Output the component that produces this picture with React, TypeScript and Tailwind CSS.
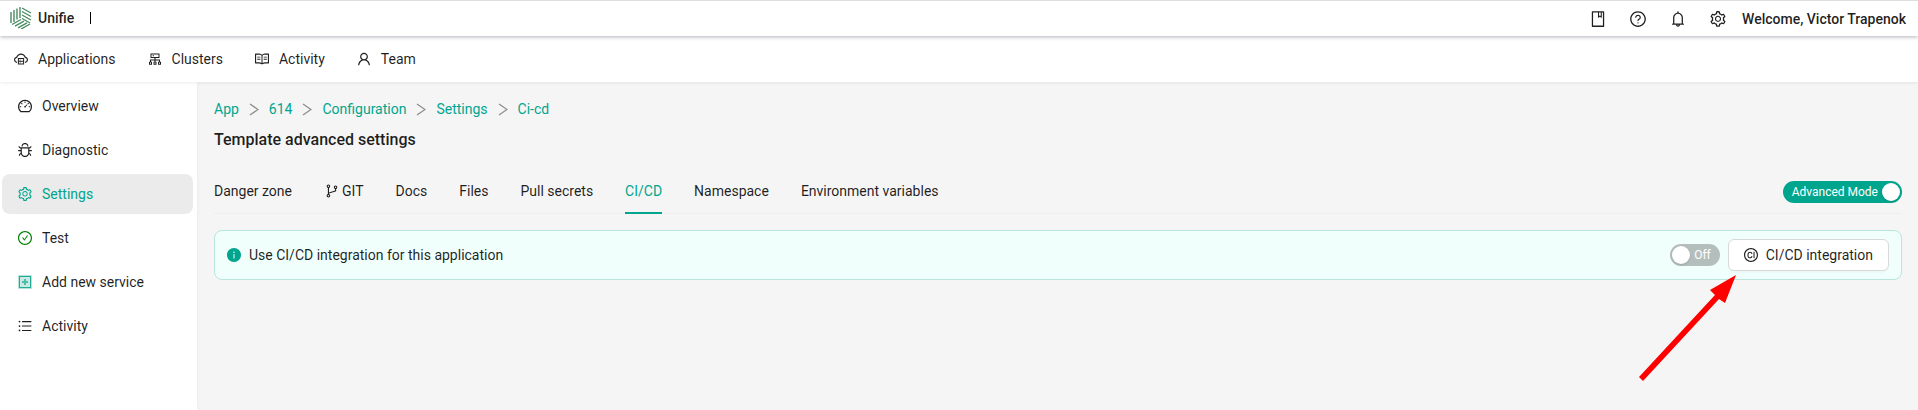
import type { ReactNode } from "react"
import {
  AiFillInfoCircle,
  AiOutlineBell,
  AiOutlineBook,
  AiOutlineBranches,
  AiOutlineBug,
  AiOutlineCheckCircle,
  AiOutlineCiCircle,
  AiOutlineCloudServer,
  AiOutlineCluster,
  AiOutlineDashboard,
  AiOutlineQuestionCircle,
  AiOutlineRead,
  AiOutlineSetting,
  AiOutlineUnorderedList,
  AiOutlineUser,
} from "react-icons/ai"

function Logo() {
  return (
    <svg width="22" height="22" viewBox="0 0 22 22" fill="none" stroke="#4a8c62" strokeWidth="1.4">
      <path d="M1 5v11M4 3v12M7 1.5v11M10 0v11" />
      <path d="M12 1l9 5M12 4.5l9 5M12 8l9 5M12 11.5l8 4.5" />
      <path d="M2 17.500l9-5M5 19.200l9-5M8 20.800l9-5M11 22l9-5" />
    </svg>
  )
}

function PlusSquare() {
  return (
    <svg width="16" height="16" viewBox="0 0 16 16">
      <rect x="1" y="1" width="14" height="14" rx="1" fill="#b5e2da" />
      <rect x="2.5" y="2.5" width="11" height="11" fill="#cbe9e3" stroke="#1fad98" />
      <path d="M8 5v6M5 8h6" stroke="#4dbdac" strokeWidth="2" />
    </svg>
  )
}

const topNav = [
  { label: "Applications", icon: <AiOutlineCloudServer size={16} /> },
  { label: "Clusters", icon: <AiOutlineCluster size={16} /> },
  { label: "Activity", icon: <AiOutlineRead size={16} /> },
  { label: "Team", icon: <AiOutlineUser size={16} /> },
]

const sideNav: { label: string; icon: ReactNode; active?: boolean }[] = [
  { label: "Overview", icon: <AiOutlineDashboard size={16} /> },
  { label: "Diagnostic", icon: <AiOutlineBug size={16} /> },
  { label: "Settings", icon: <AiOutlineSetting size={16} />, active: true },
  { label: "Test", icon: <AiOutlineCheckCircle size={16} className="text-[#008000]" /> },
  { label: "Add new service", icon: <PlusSquare /> },
  { label: "Activity", icon: <AiOutlineUnorderedList size={16} /> },
]

const crumbs = ["App", "614", "Configuration", "Settings", "Ci-cd"]

const tabs: { label: string; icon?: ReactNode; active?: boolean }[] = [
  { label: "Danger zone" },
  { label: "GIT", icon: <AiOutlineBranches size={16} /> },
  { label: "Docs" },
  { label: "Files" },
  { label: "Pull secrets" },
  { label: "CI/CD", active: true },
  { label: "Namespace" },
  { label: "Environment variables" },
]

function Header() {
  return (
    <header className="relative z-20 flex h-9 items-center justify-between border-t border-[#dedee0] bg-white pr-3 pl-2.5 shadow-[0_1px_4px_rgba(0,0,40,0.3)]">
      <div className="flex items-center pb-px font-medium">
        <Logo />
        <span className="ml-1.5">Unifie</span>
        <span className="ml-4 h-3 w-px bg-black" />
      </div>
      <div className="flex items-center gap-[22px]">
        <button aria-label="Docs"><AiOutlineBook size={18} /></button>
        <button aria-label="Help"><AiOutlineQuestionCircle size={18} /></button>
        <button aria-label="Notifications"><AiOutlineBell size={18} /></button>
        <div className="flex items-center gap-[15px]">
          <button aria-label="Settings"><AiOutlineSetting size={18} /></button>
          <span className="font-medium">Welcome, Victor Trapenok</span>
        </div>
      </div>
    </header>
  )
}

function Sidebar() {
  return (
    <aside className="w-[197px] shrink-0 bg-white px-0.5 pt-1 shadow-[0_0_4px_rgba(0,0,0,0.06)]">
      <nav className="flex flex-col gap-1">
        {sideNav.map((item, i) => (
          <a
            key={i}
            href="#"
            className={`flex h-10 w-[191px] items-center gap-[9px] rounded-lg pl-[15px] ${item.active ? "bg-[#ebebeb] text-[#00a58e]" : ""}`}
          >
            {item.icon}
            {item.label}
          </a>
        ))}
      </nav>
    </aside>
  )
}

export default function App() {
  return (
    <div className="flex min-h-screen flex-col bg-[#f5f5f5] font-['Roboto',sans-serif] text-sm text-black/88">
      <Header />
      <nav className="relative z-10 flex h-[46px] items-center gap-[31px] bg-white pl-[13px] shadow-[0_0_4px_rgba(0,0,0,0.12)]">
        {topNav.map((item) => (
          <a key={item.label} href="#" className="flex items-center gap-[9px]">
            {item.icon}
            {item.label}
          </a>
        ))}
      </nav>

      <div className="flex flex-1">
        <Sidebar />
        <main className="min-w-0 flex-1 pt-4 pr-4 pl-[17px]">
          <nav aria-label="Breadcrumb" className="flex items-center gap-2.5 leading-[22px] text-[#00a58e]">
            {crumbs.map((crumb, i) => (
              <div key={crumb} className="flex items-center gap-2.5">
                {i > 0 && (
                  <svg width="10" height="14" viewBox="0 0 10 14" fill="none" stroke="#8c8c8c" strokeWidth="1.3">
                    <path d="M1 2l8 5.500-8 5.500" />
                  </svg>
                )}
                <a href="#">{crumb}</a>
              </div>
            ))}
          </nav>
          <h1 className="mt-2 text-base font-medium">Template advanced settings</h1>

          <div className="mt-[18px] flex items-center justify-between border-b border-[#eeeeee]">
            <div role="tablist" className="-mb-px flex gap-8">
              {tabs.map((tab) => (
                <button
                  key={tab.label}
                  role="tab"
                  aria-selected={!!tab.active}
                  className={`flex h-11 items-center gap-0.5 border-b-2 ${tab.active ? "border-[#00a58e] text-[#00a58e]" : "border-transparent"}`}
                >
                  {tab.icon}
                  {tab.label}
                </button>
              ))}
            </div>
            <button
              role="switch"
              aria-checked="true"
              className="flex h-[22px] items-center gap-1 rounded-full bg-[#00a58e] pr-0.5 pl-[9px] text-xs text-white"
            >
              Advanced Mode
              <span className="size-[18px] rounded-full bg-white shadow-sm" />
            </button>
          </div>

          <div className="mt-4 flex items-center gap-2 rounded-lg border border-[#b8e6dd] bg-[#f0fffc] py-2 pr-3 pl-[11px]">
            <div className="flex flex-1 items-center gap-[7px]">
              <AiFillInfoCircle size={16} className="text-[#00a58e]" />
              <span>Use CI/CD integration for this application</span>
            </div>
            <button
              role="switch"
              aria-checked="false"
              aria-label="Use CI/CD integration"
              className="flex h-[22px] items-center gap-1 rounded-full bg-[#b4bfbd] pr-[9px] pl-0.5 text-xs text-white"
            >
              <span className="size-[18px] rounded-full bg-white shadow-sm" />
              Off
            </button>
            <div className="relative">
              <button className="flex h-8 items-center gap-[7px] rounded-md border border-[#d9d9d9] bg-white pr-[15px] pl-3.5 shadow-[0_2px_0_rgba(0,0,0,0.02)]">
                <AiOutlineCiCircle size={16} />
                CI/CD integration
              </button>
              <svg
                className="pointer-events-none absolute top-9 right-[152px]"
                width="98"
                height="106"
                viewBox="0 0 98 106"
                fill="#ff0000"
              >
                <path d="M97 0L86 28l-6-4L4 106l-4-4L76 20l-5-5z" />
              </svg>
            </div>
          </div>
        </main>
      </div>
    </div>
  )
}
